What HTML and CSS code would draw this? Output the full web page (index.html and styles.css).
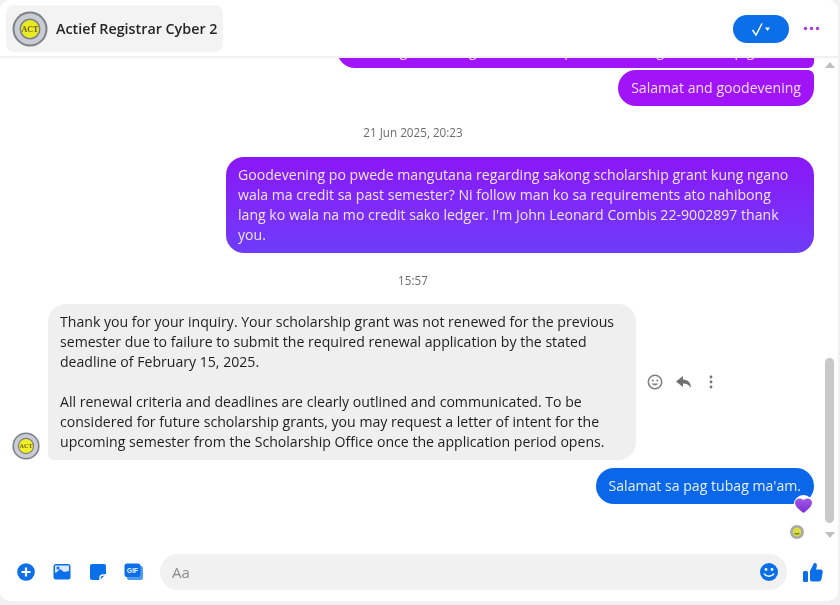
FILE: index.html
```html
<!DOCTYPE html>
<html lang="en">
<head>
<meta charset="utf-8">
<title>Actief Registrar Cyber 2</title>
<link rel="stylesheet" href="styles.css">
</head>
<body>
<main class="window">
  <header class="topbar">
    <div class="contact">
      <svg class="logo logo-lg" viewBox="0 0 36 36"><circle cx="18" cy="18" r="17.500" fill="#7d8183"/><circle cx="18" cy="18" r="15.500" fill="#c9ccd6"/><circle cx="18" cy="18" r="10.500" fill="#7c8082"/><circle cx="18" cy="18" r="9" fill="#e9ea26"/><text x="18" y="21" text-anchor="middle" class="logo-text">ACT</text></svg>
      <span class="contact-name">Actief Registrar Cyber 2</span>
    </div>
    <div class="top-actions">
      <button class="check-pill" type="button" aria-label="Mark as read">
        <svg width="24" height="16" viewBox="0 0 24 16"><path d="M3.500 9l3.500 5 6-11.500" fill="none" stroke="#fff" stroke-width="1.500"/><path d="M16 6.500h5l-2.500 3.500z" fill="#fff"/></svg>
      </button>
      <svg class="dots" width="17" height="5" viewBox="0 0 17 5"><circle cx="2.500" cy="2.500" r="1.700"/><circle cx="8.500" cy="2.500" r="1.700"/><circle cx="14.500" cy="2.500" r="1.700"/></svg>
    </div>
  </header>

  <div class="body-row">
    <section class="thread">
      <div class="row-out row-clipped">
        <div class="bubble bubble-purple clipped">Hi, mangutana lang ko unsa na update sa akong scholarship grant</div>
      </div>
      <div class="row-out second">
        <div class="bubble bubble-purple one-line">Salamat and goodevening</div>
      </div>
      <div class="stamp stamp-a">21 Jun 2025, 20:23</div>
      <div class="row-out">
        <div class="bubble bubble-gradient">Goodevening po pwede mangutana regarding sakong scholarship grant kung ngano wala ma credit sa past semester? Ni follow man ko sa requirements ato nahibong lang ko wala na mo credit sako ledger. I'm John Leonard Combis 22-9002897 thank you.</div>
      </div>
      <div class="stamp stamp-b">15:57</div>
      <div class="row-in">
        <svg class="logo logo-sm" viewBox="0 0 36 36"><circle cx="18" cy="18" r="17.500" fill="#7d8183"/><circle cx="18" cy="18" r="15.500" fill="#c9ccd6"/><circle cx="18" cy="18" r="10.500" fill="#7c8082"/><circle cx="18" cy="18" r="9" fill="#f0f022"/><text x="18" y="21" text-anchor="middle" class="logo-text">ACT</text></svg>
        <div class="bubble bubble-gray">
          <p>Thank you for your inquiry. Your scholarship grant was not renewed for the previous semester due to failure to submit the required renewal application by the stated deadline of February 15, 2025.</p>
          <p>All renewal criteria and deadlines are clearly outlined and communicated. To be considered for future scholarship grants, you may request a letter of intent for the upcoming semester from the Scholarship Office once the application period opens.</p>
        </div>
        <div class="msg-tools">
          <svg width="16" height="16" viewBox="0 0 16 16"><circle cx="8" cy="8" r="6.700" fill="none" stroke="#7d7d7d" stroke-width="1.500"/><circle cx="5.800" cy="6.500" r="1" fill="#7d7d7d"/><circle cx="10.200" cy="6.500" r="1" fill="#7d7d7d"/><path d="M4.800 9.500c1.500 2.600 4.900 2.600 6.400 0z" fill="#7d7d7d"/></svg>
          <svg width="18" height="14" viewBox="0 0 18 14"><path d="M8 1L1 6.500 8 12V8.500c3.500 0 6 1 8 4.500 0-5-3-8.500-8-8.500z" fill="#6f6f6f"/></svg>
          <svg width="12" height="14" viewBox="0 0 12 14"><circle cx="6" cy="2" r="1.400" fill="#767676"/><circle cx="6" cy="7" r="1.400" fill="#767676"/><circle cx="6" cy="12" r="1.400" fill="#767676"/></svg>
        </div>
      </div>
      <div class="row-out reply">
        <div class="bubble bubble-blue one-line">Salamat sa pag tubag ma'am.
          <svg class="heart" width="21" height="20" viewBox="0 0 21 20"><defs><linearGradient id="heart-fill" x1="0" y1="0" x2="0" y2="1"><stop offset="0" stop-color="#a45be6"/><stop offset="1" stop-color="#7a2bd2"/></linearGradient></defs><circle cx="10.500" cy="10" r="10" fill="#fff"/><path d="M10.500 18C6 14.500 2 11.500 2 7.500 2 3.800 6.800 1.800 10.500 5 14.200 1.800 19 3.800 19 7.500 19 11.500 15 14.500 10.500 18z" fill="url(#heart-fill)"/></svg>
        </div>
      </div>
      <div class="row-out seen-row">
        <svg class="logo logo-xs" viewBox="0 0 36 36"><circle cx="18" cy="18" r="18" fill="#a9aca6"/><circle cx="18" cy="18" r="11" fill="#dede3c"/><path d="M12 21c3 3 9 3 12 0" fill="none" stroke="#5f5f30" stroke-width="3"/></svg>
      </div>
    </section>
    <aside class="scroll">
      <span class="arrow arrow-up"></span>
      <div class="track"><div class="thumb"></div></div>
      <span class="arrow arrow-down"></span>
    </aside>
  </div>

  <footer class="composer">
    <svg class="tool" width="20" height="20" viewBox="0 0 20 20"><circle cx="10" cy="10" r="8.800" fill="#0a6fe8"/><path d="M10 5.500v9M5.500 10h9" stroke="#fff" stroke-width="2.200"/></svg>
    <svg class="tool" width="20" height="20" viewBox="0 0 20 20"><rect x="1.500" y="2" width="17" height="15.500" rx="2.500" fill="#0a6fe8"/><rect x="3" y="3.500" width="14" height="7" fill="#d8e8fb"/><circle cx="6" cy="6" r="1.500" fill="#0a6fe8"/><path d="M3 12l5-5 4 3 5-1v3z" fill="#0a6fe8"/></svg>
    <svg class="tool" width="20" height="20" viewBox="0 0 20 20"><path d="M4 2h12a2 2 0 0 1 2 2v8l-6 6H4a2 2 0 0 1-2-2V4a2 2 0 0 1 2-2z" fill="#0a6fe8"/><path d="M18 13h-3a3 3 0 0 0-3 3v2" fill="none" stroke="#fff" stroke-width="1.500"/></svg>
    <svg class="tool" width="20" height="20" viewBox="0 0 20 20"><rect x="3" y="4" width="16" height="14" rx="2" fill="#4e9bf1"/><rect x="0.500" y="1.500" width="16" height="13.500" rx="2.500" fill="#0a6fe8"/><text x="8.500" y="11" text-anchor="middle" class="gif-text">GIF</text></svg>
    <div class="input">
      <span class="placeholder">Aa</span>
      <svg width="20" height="20" viewBox="0 0 20 20"><circle cx="10" cy="10" r="9" fill="#0a6fe8"/><circle cx="7" cy="7.500" r="1.400" fill="#fff"/><circle cx="13" cy="7.500" r="1.400" fill="#fff"/><path d="M5 11.500c1.800 3.500 8.200 3.500 10 0" fill="none" stroke="#fff" stroke-width="1.500"/></svg>
    </div>
    <svg class="like" width="22" height="22" viewBox="0 0 22 22"><rect x="1" y="10" width="5" height="11" rx="1.500" fill="#0a6fe8"/><path d="M8 10l3.500-7c.5-1.500 3-1.500 3.300.5.200 1.500-.3 3.500-.8 5h4.500c2 0 2.500 1.500 2.200 3l-1.200 6.500c-.3 1.500-1.300 2.500-3 2.500H10c-1.200 0-2-.8-2-2z" fill="#0a6fe8"/></svg>
  </footer>
</main>
</body>
</html>
```
FILE: styles.css
```css
* { box-sizing: border-box; }
html, body { margin: 0; height: 100%; }
body {
  width: 840px;
  height: 605px;
  overflow: hidden;
  background: #f1f1f2;
  font-family: "Open Sans", "Liberation Sans", sans-serif;
  color: #1c1c1c;
}
.window {
  width: 838px;
  height: 601px;
  background: #fff;
  border-radius: 10px;
  display: flex;
  flex-direction: column;
  overflow: hidden;
  filter: blur(0.5px);
}
.topbar {
  flex: 0 0 58px;
  display: flex;
  align-items: center;
  justify-content: space-between;
  padding: 1px 18px 0 6px;
  border-bottom: 2px solid #f1f1f1;
  position: relative;
  z-index: 2;
  background: #fff;
}
.contact {
  height: 47px;
  display: flex;
  align-items: center;
  gap: 8px;
  padding: 0 6px;
  background: #f3f3f4;
  border-radius: 8px;
}
.contact-name {
  font-size: 14.3px;
  font-weight: 600;
  color: #262626;
}
.logo { display: block; flex: none; }
.logo-lg { width: 36px; height: 36px; }
.logo-sm { width: 28px; height: 28px; margin-right: 8px; }
.logo-xs { width: 14px; height: 14px; }
.logo-text { font-size: 8px; font-weight: 700; fill: #6c5a10; font-family: "Liberation Serif", serif; }
.top-actions { display: flex; align-items: center; gap: 14px; }
.check-pill {
  width: 56px;
  height: 28px;
  border: 0;
  border-radius: 14px;
  background: #0a6fe8;
  display: flex;
  align-items: center;
  justify-content: center;
  padding: 0;
}
.dots { fill: #a93ae6; }
.body-row { flex: 1; display: flex; min-height: 0; }
.thread {
  flex: 1;
  min-width: 0;
  padding: 0 8px 0 12px;
  display: flex;
  flex-direction: column;
  font-size: 14.1px;
  line-height: 20px;
}
.thread > * { flex: none; }
.row-out { display: flex; justify-content: flex-end; }
.row-clipped { height: 10px; overflow: hidden; align-items: flex-end; margin-bottom: 2px; }
.row-clipped .clipped {
  width: 477px;
  flex: none;
  padding: 8px 12px 7px;
  white-space: nowrap;
  overflow: hidden;
  border-radius: 0 0 6px 18px;
}
.bubble { padding: 8px 12px; }
.one-line { border-radius: 18px; white-space: nowrap; position: relative; padding: 8px 13px; }
.second .bubble { border-top-right-radius: 6px; }
.bubble-purple { background: #a014f7; color: #f1dcff; }
.bubble-blue { background: #0b67ea; color: #e6f0ff; }
.bubble-gradient {
  width: 588px;
  border-radius: 18px;
  color: #efe4ff;
  background: linear-gradient(180deg, #8a17f6 0%, #7c2cf8 55%, #6e3cf8 100%);
}
.stamp {
  text-align: center;
  font-size: 11.700px;
  line-height: 14px;
  color: #6c6c6c;
}
.stamp-a { margin: 19px 0 18px; }
.stamp-b { margin: 20px 0 17px; }
.row-in { display: flex; align-items: flex-end; }
.bubble-gray {
  width: 588px;
  background: #efefef;
  border-radius: 18px 18px 18px 6px;
  color: #1e1e1e;
}
.bubble-gray p { margin: 0; }
.bubble-gray p + p { margin-top: 20px; }
.msg-tools {
  display: flex;
  align-items: center;
  gap: 12px;
  align-self: center;
  margin-left: 11px;
}
.reply { margin-top: 8px; }
.heart { position: absolute; right: 0; bottom: -11px; }
.seen-row { margin-top: 21px; padding-right: 10px; }
.scroll {
  flex: 0 0 16px;
  display: flex;
  flex-direction: column;
  align-items: center;
  padding: 4px 1px 0 0;
}
.arrow { flex: none; width: 0; height: 0; border-left: 5px solid transparent; border-right: 5px solid transparent; }
.arrow-up { border-bottom: 6px solid #c0c0c0; }
.arrow-down { border-top: 6px solid #c0c0c0; }
.track { flex: 0 0 464px; width: 100%; display: flex; flex-direction: column; justify-content: flex-end; padding: 0 3px 9px; }
.thumb { height: 165px; background: #c8c8c8; border-radius: 5px; }
.composer {
  flex: 0 0 58px;
  display: flex;
  align-items: center;
  padding: 0 16px;
  gap: 16px;
}
.tool, .like { flex: none; }
.gif-text { font-size: 6.500px; font-weight: 700; fill: #fff; font-family: "Liberation Sans", sans-serif; }
.input {
  width: 627px;
  height: 36px;
  flex: none;
  background: #f1f1f2;
  border-radius: 18px;
  display: flex;
  align-items: center;
  justify-content: space-between;
  padding: 0 8px 0 12px;
}
.placeholder { font-size: 15px; color: #8a8a8a; }
.like { margin-left: -1px; }
```
